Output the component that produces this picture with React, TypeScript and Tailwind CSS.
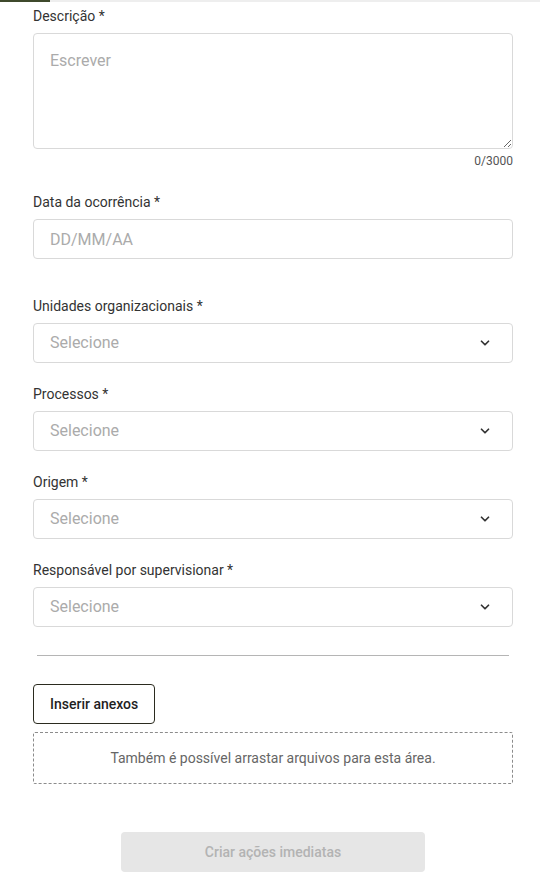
import { ChevronDown } from 'lucide-react';

const font = { fontFamily: 'Roboto, "Liberation Sans", sans-serif' };

function SelectField({ label }: { label: string }) {
  return (
    <div className="flex flex-col">
      <label className="text-[14px] leading-5 text-[#333] mb-[7px]">{label}</label>
      <button
        type="button"
        className="h-10 w-full flex items-center justify-between pl-4 pr-[20px] border border-[#d9d9d9] rounded-[4px] bg-white text-left"
      >
        <span className="text-[16px] text-[#ababab]">Selecione</span>
        <ChevronDown className="w-[14px] h-[14px] text-[#333]" strokeWidth={3} />
      </button>
    </div>
  );
}

export default function App() {
  return (
    <div className="min-h-screen bg-white" style={font}>
      {/* barra de progresso */}
      <div className="h-[2px] w-full bg-[#eeeeee] flex">
        <div className="h-full w-[50px] bg-[#3f4a2c]" />
      </div>

      <main className="px-[33px] pt-1 pb-4 w-[546px]">
        {/* Descrição */}
        <div className="flex flex-col">
          <label className="text-[14px] leading-5 text-[#333] mb-[7px]">Descrição *</label>
          <textarea
            placeholder="Escrever"
            className="h-[116px] w-full px-4 pt-[15px] pb-4 border border-[#d9d9d9] rounded-[4px] text-[16px] placeholder:text-[#ababab] outline-none"
          />
          <span className="mt-1 text-[12px] leading-4 text-[#555] text-right">0/3000</span>
        </div>

        {/* Data */}
        <div className="flex flex-col mt-[23px]">
          <label className="text-[14px] leading-5 text-[#333] mb-[7px]">Data da ocorrência *</label>
          <input
            placeholder="DD/MM/AA"
            className="h-10 w-full px-4 border border-[#d9d9d9] rounded-[4px] text-[16px] placeholder:text-[#ababab] outline-none"
          />
        </div>

        <div className="mt-[37px] flex flex-col gap-[21px]">
          <SelectField label="Unidades organizacionais *" />
          <SelectField label="Processos *" />
          <SelectField label="Origem *" />
          <SelectField label="Responsável por supervisionar *" />
        </div>

        <div className="mt-[28px] mx-1 h-px bg-[#b5b5b5]" />

        <button
          type="button"
          className="mt-[28px] h-10 px-4 border border-[#2b2b1f] rounded-[4px] text-[14px] font-medium text-[#1f1f1f]"
        >
          Inserir anexos
        </button>

        <div className="mt-2 h-[52px] flex items-center justify-center border border-dashed border-[#8c8c8c] rounded-[2px]">
          <span className="text-[14px] text-[#666]">Também é possível arrastar arquivos para esta área.</span>
        </div>

        <div className="mt-[48px] flex justify-center">
          <button
            type="button"
            disabled
            className="h-10 w-[304px] rounded-[4px] bg-[#e6e6e6] text-[14px] font-medium text-[#b3b3b3]"
          >
            Criar ações imediatas
          </button>
        </div>
      </main>
    </div>
  );
}
